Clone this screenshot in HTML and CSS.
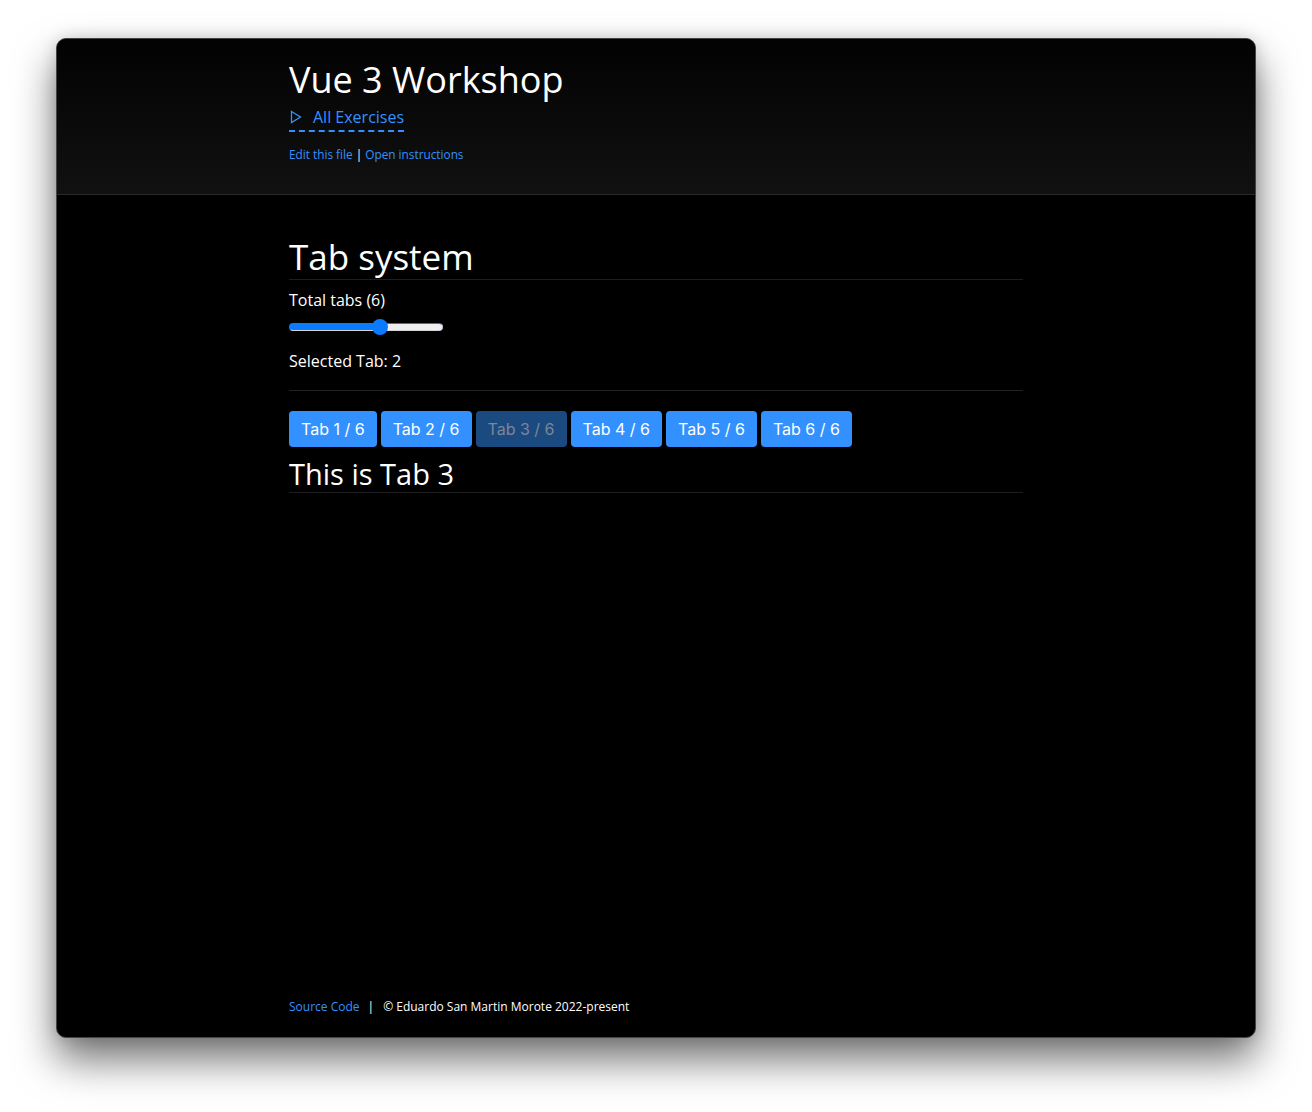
FILE: index.html
```html
<!DOCTYPE html>
<html lang="en">
<head>
<meta charset="utf-8">
<title>Vue 3 Workshop</title>
<link rel="stylesheet" href="styles.css">
</head>
<body>
<div class="window">
  <header class="site-header">
    <div class="container">
      <h1 class="site-title">Vue 3 Workshop</h1>
      <div class="exercises"><svg class="tri" width="12" height="14" viewBox="0 0 12 14"><polygon points="1.5,1.5 10.5,7 1.5,12.5" fill="none" stroke="#3391ff" stroke-width="1.3" stroke-linejoin="miter"/></svg><span class="exercises-label">All Exercises</span></div>
      <p class="edit-links"><a href="#">Edit this file</a> | <a href="#">Open instructions</a></p>
    </div>
  </header>
  <main class="content">
    <div class="container">
      <h1 class="page-title">Tab system</h1>
      <label class="total">Total tabs (6)</label>
      <input class="slider" type="range" min="0" max="10" value="6">
      <p class="selected">Selected Tab: 2</p>
      <hr class="sep">
      <div class="tabs">
        <button class="tab">Tab 1 / 6</button>
        <button class="tab">Tab 2 / 6</button>
        <button class="tab" disabled>Tab 3 / 6</button>
        <button class="tab">Tab 4 / 6</button>
        <button class="tab">Tab 5 / 6</button>
        <button class="tab">Tab 6 / 6</button>
      </div>
      <h2 class="tab-title">This is Tab 3</h2>
    </div>
  </main>
  <footer class="site-footer">
    <div class="container">
      <a href="#">Source Code</a><span class="bar">|</span><span>© Eduardo San Martin Morote 2022-present</span>
    </div>
  </footer>
</div>
</body>
</html>
```

FILE: styles.css
```css
html, body {
  margin: 0;
  padding: 0;
}
body {
  background: #ffffff;
  font-family: "Open Sans", "Noto Sans", sans-serif;
  color: #fff;
  padding: 38px 56px 74px;
}
.window {
  box-sizing: border-box;
  width: 1200px;
  height: 1000px;
  background: #000;
  border: 1px solid #454545;
  border-radius: 10px;
  overflow: hidden;
  box-shadow: 0 22px 40px rgba(0, 0, 0, 0.55), 0 0 16px rgba(0, 0, 0, 0.15);
  display: flex;
  flex-direction: column;
}
.container {
  width: 734px;
  margin: 0 auto;
}
a {
  color: #3391ff;
  text-decoration: none;
}
.site-header {
  background: linear-gradient(#020202, #111);
  border-bottom: 1px solid #2a2a2a;
  padding: 17px 0 32px;
}
.site-title {
  margin: 0;
  font-size: 36px;
  font-weight: 400;
  line-height: 48px;
}
.exercises {
  display: inline-flex;
  align-items: center;
  color: #3391ff;
  font-size: 16px;
  line-height: 24px;
  border-bottom: 2px dashed #3391ff;
  padding-bottom: 1px;
  margin-top: 1px;
}
.tri {
  display: block;
  margin: 0 11px 0 1px;
}
.edit-links {
  margin: 14px 0 0;
  font-size: 11.8px;
  line-height: 16px;
  color: #fff;
}
.content {
  flex: 1;
  padding-top: 40px;
}
.page-title {
  margin: 0;
  font-size: 35px;
  font-weight: 400;
  line-height: 44px;
  border-bottom: 1px solid #1e1e1e;
}
.total {
  display: block;
  margin-top: 8px;
  font-size: 16px;
  line-height: 24px;
}
.slider {
  -webkit-appearance: none;
  appearance: none;
  display: block;
  width: 154px;
  height: 16px;
  margin: 7px 0 0;
  padding: 0;
  background: transparent;
}
.slider::-webkit-slider-runnable-track {
  height: 8px;
  box-sizing: border-box;
  border-radius: 4px;
  background: linear-gradient(to right, #0a7bff 0 59%, #efefef 59% 100%);
  border: 1px solid #cfcfcf;
  border-left-color: #0a7bff;
  border-top-color: #0a7bff;
  border-bottom-color: #d5d5d5;
}
.slider::-webkit-slider-thumb {
  -webkit-appearance: none;
  width: 16px;
  height: 16px;
  border-radius: 50%;
  background: #0a7bff;
  margin-top: -5px;
  border: none;
}
.selected {
  margin: 14px 0 0;
  font-size: 16px;
  line-height: 24px;
}
.sep {
  margin: 17px 0 20px;
  border: 0;
  border-top: 1px solid #222;
}
.tabs {
  display: flex;
  gap: 4px;
}
.tab {
  font-family: Inter, "Liberation Sans", sans-serif;
  font-size: 16px;
  line-height: 20px;
  color: #fff;
  background: #3391ff;
  border: none;
  border-radius: 4px;
  padding: 0 12px;
  height: 36px;
}
.tab:disabled {
  background: #1b4a80;
  color: #7d8696;
}
.tab-title {
  margin: 8px 0 0;
  font-size: 29px;
  font-weight: 400;
  line-height: 37px;
  border-bottom: 1px solid #1e1e1e;
}
.site-footer {
  padding: 0 0 21px;
  font-size: 12px;
  line-height: 18px;
}
.bar {
  margin: 0 9px 0 8px;
}
```
